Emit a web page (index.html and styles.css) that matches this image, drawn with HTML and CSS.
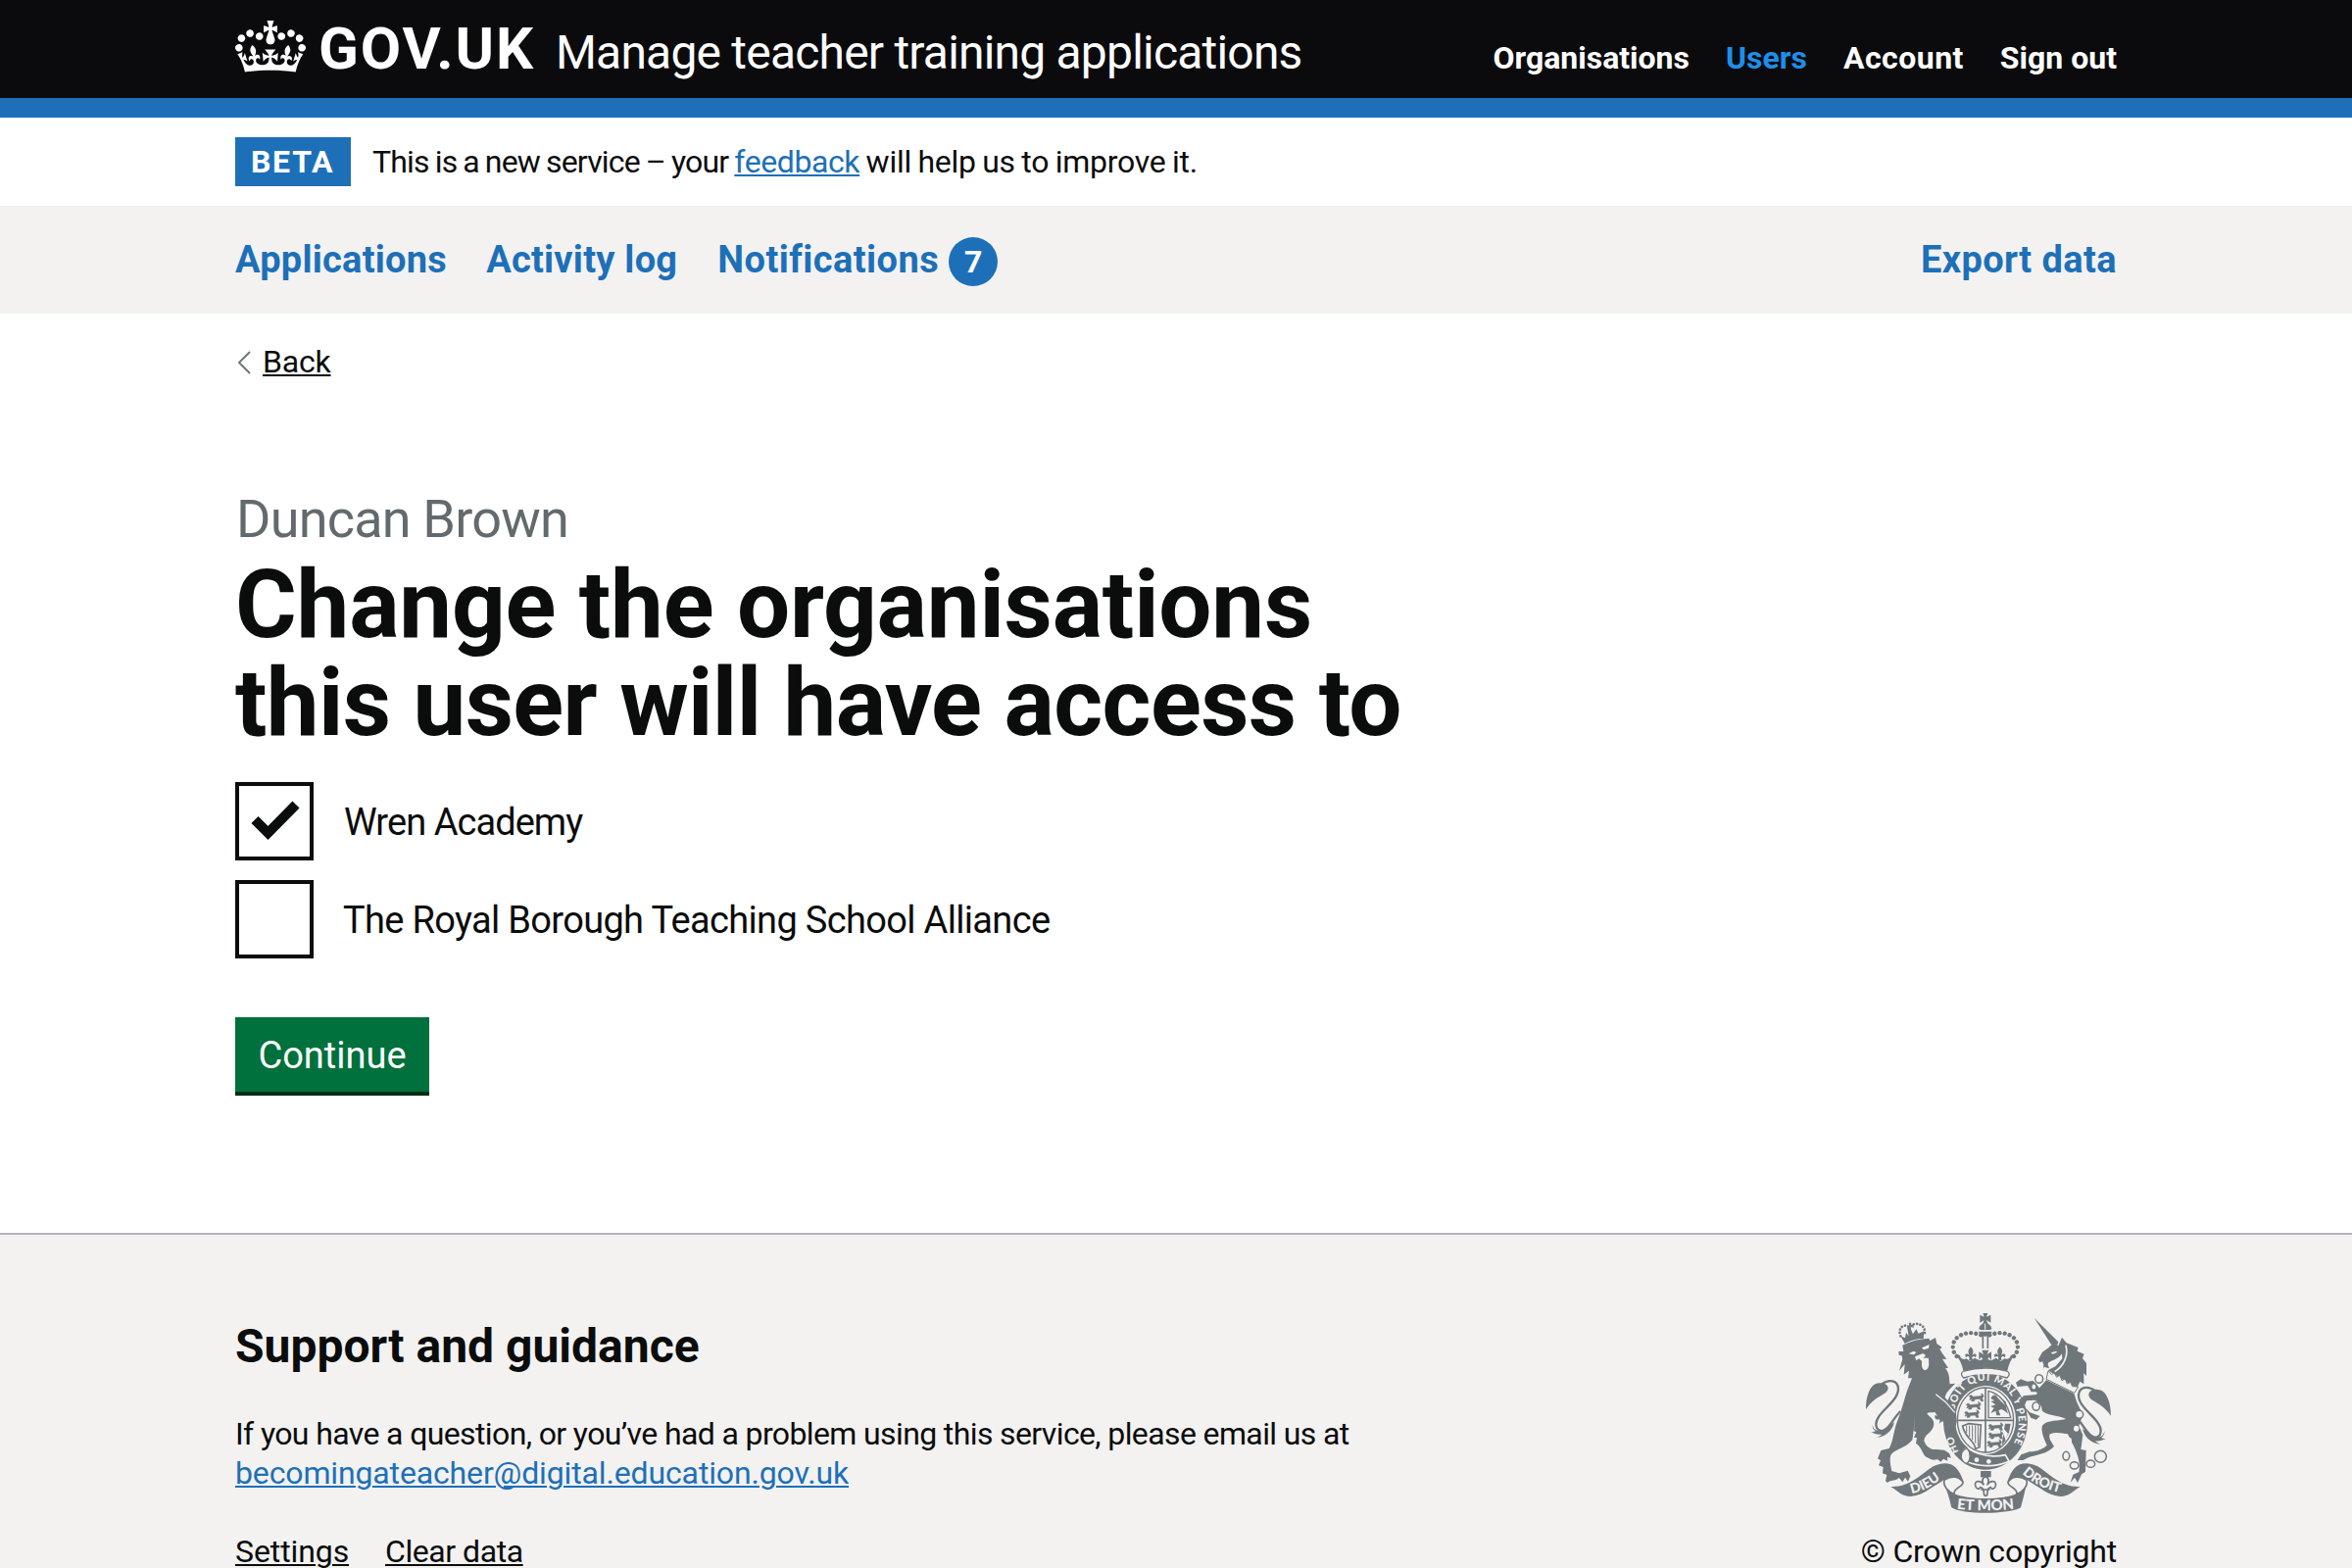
FILE: index.html
```html
<!DOCTYPE html>
<html lang="en">
<head>
<meta charset="utf-8">
<title>Change the organisations this user will have access to</title>
<link rel="stylesheet" href="styles.css">
</head>
<body>
<header class="header">
  <div class="container header-row">
    <a class="logo" href="#">
      <svg class="crown" viewBox="0 0 132 97" aria-hidden="true"><path fill="currentColor" fill-rule="evenodd" d="M25 30.2c3.5 1.5 7.7-.2 9.1-3.7 1.5-3.6-.2-7.8-3.9-9.2-3.6-1.4-7.6.3-9.1 3.9-1.4 3.5.3 7.5 3.9 9zM9 39.5c3.6 1.5 7.8-.2 9.2-3.7 1.5-3.6-.2-7.8-3.9-9.1-3.6-1.5-7.6.2-9.1 3.8-1.4 3.5.3 7.5 3.8 9zM4.4 57.2c3.5 1.5 7.7-.2 9.1-3.8 1.5-3.6-.2-7.7-3.9-9.1-3.5-1.5-7.6.3-9.1 3.8-1.4 3.5.3 7.6 3.9 9.1zm38.3-21.4c3.5 1.5 7.7-.2 9.1-3.8 1.5-3.6-.2-7.7-3.9-9.1-3.6-1.5-7.6.3-9.1 3.8-1.3 3.6.4 7.7 3.9 9.1zm64.4-5.6c-3.6 1.5-7.8-.2-9.1-3.7-1.5-3.6.2-7.8 3.8-9.2 3.6-1.4 7.7.3 9.2 3.9 1.3 3.5-.4 7.5-3.9 9zm15.9 9.3c-3.6 1.5-7.7-.2-9.1-3.7-1.5-3.6.2-7.8 3.7-9.1 3.6-1.5 7.7.2 9.2 3.8 1.5 3.5-.3 7.5-3.8 9zm4.7 17.7c-3.6 1.5-7.8-.2-9.2-3.8-1.5-3.6.2-7.7 3.9-9.1 3.6-1.5 7.7.3 9.2 3.8 1.3 3.5-.4 7.6-3.9 9.1zM89.3 35.8c-3.6 1.5-7.8-.2-9.2-3.8-1.4-3.6.2-7.7 3.9-9.1 3.6-1.5 7.7.3 9.2 3.8 1.4 3.6-.3 7.7-3.9 9.1zM69.7 17.7l8.9 4.7V9.3l-8.9 2.8c-.2-.3-.5-.6-.9-.9L72.4 0H59.6l3.5 11.2c-.3.3-.6.5-.9.9l-8.8-2.8v13.1l8.8-4.7c.3.3.6.7.9.9l-5 15.4v.1c-.2.8-.4 1.6-.4 2.4 0 4.1 3.1 7.5 7 8.1h.2c.3 0 .7.1 1 .1.4 0 .7 0 1-.1h.2c4-.6 7.1-4.1 7.1-8.1 0-.8-.1-1.7-.4-2.4V34l-5.1-15.4c.4-.2.7-.6 1-.9zM66 92.8c16.9 0 32.8 1.1 47.1 3.2 4-16.9 8.9-26.7 14-33.5l-9.6-3.4c1 4.9 1.1 7.2 0 10.2-1.5-1.4-3-4.3-4.2-8.7L108.6 76c2.8-2 5-3.2 7.5-3.3-4.4 9.4-10 11.9-13.6 11.2-4.3-.8-6.3-4.6-5.6-7.9 1-4.7 5.7-5.9 8-.5 4.3-8.7-3-11.4-7.6-8.8 7.1-7.2 7.9-13.5 2.1-21.1-8 6.1-8.1 12.3-4.5 20.8-4.7-5.4-12.1-2.5-9.5 6.2 3.4-5.2 7.9-2 7.2 3.1-.6 4.3-6.4 7.8-13.5 7.2-10.3-.9-10.9-8-11.2-13.8 2.5-.5 7.1 1.8 11 7.3L80.2 60c-4.1 4.4-8 5.3-12.3 5.4 1.4-4.4 8-11.6 8-11.6H55.5s6.4 7.2 7.9 11.6c-4.2-.1-8-1-12.3-5.4l1.4 16.4c3.9-5.5 8.5-7.7 10.9-7.3-.3 5.8-.9 12.8-11.1 13.8-7.2.6-12.9-2.9-13.5-7.2-.7-5 3.8-8.3 7.1-3.1 2.7-8.7-4.6-11.6-9.4-6.2 3.7-8.5 3.6-14.7-4.6-20.8-5.8 7.6-5 13.9 2.2 21.1-4.7-2.6-11.9.1-7.7 8.8 2.3-5.5 7.1-4.2 8.1.5.7 3.3-1.3 7.1-5.7 7.9-3.5.7-9-1.8-13.5-11.2 2.5.1 4.7 1.3 7.5 3.3l-4.7-15.4c-1.2 4.4-2.7 7.2-4.3 8.7-1.1-3-.9-5.3 0-10.2l-9.5 3.4c5 6.9 9.9 16.7 14 33.5 14.8-2.1 30.8-3.2 47.7-3.2z"/></svg>
      <span class="logotype">GOV.UK</span>
    </a>
    <a class="product" href="#">Manage teacher training applications</a>
    <nav class="account-nav">
      <a href="#">Organisations</a>
      <a class="current" href="#">Users</a>
      <a class="account" href="#">Account</a>
      <a href="#">Sign out</a>
    </nav>
  </div>
</header>

<div class="container phase">
  <strong class="tag">BETA</strong>
  <span class="phase-text">This is a new service – your <a class="link feedback" href="#">feedback</a><span class="phase-tail"> will help us to improve it.</span></span>
</div>

<nav class="primary-nav">
  <div class="container primary-row">
    <a href="#">Applications</a>
    <a class="activity" href="#">Activity log</a>
    <a class="notifications" href="#">Notifications</a>
    <span class="badge">7</span>
    <a class="export" href="#">Export data</a>
  </div>
</nav>

<main class="container main">
  <a class="back" href="#">
    <svg class="chevron" viewBox="0 0 14 24" aria-hidden="true"><path d="M13 1 2 12l11 11" fill="none" stroke="#6f777b" stroke-width="2"/></svg>
    <span>Back</span>
  </a>
  <span class="caption">Duncan Brown</span>
  <h1 class="title"><span class="title-first">Change the organisations</span><br><span class="title-second">this user will have access to</span></h1>
  <div class="checkboxes">
    <label class="option">
      <span class="box"><svg viewBox="0 0 72 72" aria-hidden="true"><path d="M16 34.5 29.5 48 58 19" fill="none" stroke="#0b0c0c" stroke-width="10"/></svg></span>
      <span class="label label-wren">Wren Academy</span>
    </label>
    <label class="option">
      <span class="box"></span>
      <span class="label">The Royal Borough Teaching School Alliance</span>
    </label>
  </div>
  <button class="button" type="button">Continue</button>
</main>

<footer class="footer">
  <div class="container footer-row">
    <div class="footer-main">
      <h2 class="footer-heading">Support and guidance</h2>
      <p class="support">If you have a question, or you’ve had a problem using this service, please email us at<br><a class="link email" href="#">becomingateacher@digital.education.gov.uk</a></p>
      <div class="footer-links"><a class="settings" href="#">Settings</a><a href="#">Clear data</a></div>
    </div>
    <div class="footer-meta">
      <svg class="crest" viewBox="72 60 750 612" aria-hidden="true">
        <defs>
          <path id="motto" d="M343 356A97 112 0 0 1 534 362A97 112 0 0 1 509 480"/>
          <path id="honi" d="M356 484A97 113 0 0 1 339 427"/>
          <path id="dieu" d="M212 612Q264 603 320 552"/>
          <path id="mon" d="M350 659Q438 669 526 659"/>
          <path id="droit" d="M550 550Q602 599 678 612"/>
          <g id="fleur"><path d="M0-20C-9-10-9-4-4 6-13-4-22 4-14 12-10 7-5 9-4 14L-6 22H6L4 14C5 9 10 7 14 12 22 4 13-4 4 6 9-4 9-10 0-20z"/></g>
          <g id="passant"><path d="M2 8C6 2 12 5 14 9L34 7C42 8 42 2 38 0 46 0 49 8 42 13L45 22H38L35 15 20 16 17 22H9L11 16 3 18 7 12z" stroke="#6f777b" stroke-width="2"/></g>
          <g id="tail"><path d="M72 354C72 315 84 276 112 274 126 272 138 276 140 289 137 314 106 306 72 354z"/><path d="M120 278C143 260 170 266 171 291 172 332 103 363 103 400 103 414 112 422 124 420 144 414 152 386 178 360" fill="none" stroke="#6f777b" stroke-width="7"/><path d="M92 401C94 414 103 420 115 421L140 407 159 394C153 416 139 437 104 441 112 438 117 435 120 431 108 433 99 430 88 424 96 424 99 422 101 420 94 416 91 410 92 401z"/></g>
        </defs>
        <g fill="#6f777b">
          <!-- royal crown -->
          <path d="M421 65 434 71 430 60H445L441 71 454 65V89L441 81 446 94H429L434 81 421 89z"/>
          <path d="M418 108A19 17 0 0 1 457 108L452 111H423z"/><path d="M437 92V110" stroke="#f3f2f1" stroke-width="3"/>
          <path d="M417 116H458Q454 131 437 131 421 131 417 116z"/>
          <path d="M430 130V168M445 130V168" stroke="#6f777b" stroke-width="5"/>
          <path d="M424 127C400 117 372 118 352 134 333 150 335 177 350 192M451 127C475 117 503 118 523 134 542 150 540 177 525 192" fill="none" stroke="#6f777b" stroke-width="13" stroke-linecap="round" stroke-dasharray="0.1 15.5"/>
          <path d="M346 183 360 190C362 202 372 202 380 199L390 207 405 197 420 205 430 201 425 194 418 204V178L432 186 427 173H448L443 186 456 178V204L449 194 445 201 455 205 470 197 485 207 496 199C504 202 514 200 515 190L529 183C517 201 508 218 505 236Q437 218 370 236C367 218 358 201 346 183z"/>
          <use href="#fleur" x="393" y="183"/><use href="#fleur" x="482" y="183"/>
          <!-- garter and shield -->
          <ellipse cx="438" cy="392" rx="129" ry="147"/>
          <ellipse cx="438" cy="387" rx="93" ry="105" fill="#f3f2f1"/>
          <ellipse cx="438" cy="387" rx="86" ry="99" fill="none" stroke="#6f777b" stroke-width="4"/>
          <path d="M372 237Q437 219 503 237C514 242 512 251 504 258Q437 238 371 258C363 251 361 242 372 237z" fill="#f3f2f1" stroke="#6f777b" stroke-width="4"/>
          <path d="M438 287V487M352 388H524" stroke="#6f777b" stroke-width="5"/>
          <use href="#passant" x="386" y="307"/><use href="#passant" x="377" y="332"/><use href="#passant" x="372" y="357"/>
          <path d="M447 380V298Q500 312 515 380z" fill="none" stroke="#6f777b" stroke-width="4"/>
          <path d="M455 322C457 309 471 307 474 317L486 330 498 341 492 325 500 331 501 348 507 368 498 360 487 354 478 358 484 373H472L469 359 454 366 464 350 453 345 469 340 455 330 466 327z"/>
          <path d="M368 405 387 398 424 402 420 470 407 475C406 450 374 442 368 405z" fill="none" stroke="#6f777b" stroke-width="5"/>
          <path d="M380 405V426M389 404V438M398 403V448M407 403V458M415 403V467" stroke="#6f777b" stroke-width="3"/>
          <use href="#passant" x="445" y="396"/><use href="#passant" x="445" y="422"/><use href="#passant" x="441" y="448"/>
          <path d="M498 398H515L510 425 500 445 507 428 495 415zM493 430 500 450 488 464z"/>
          <path d="M383 473C364 479 360 502 378 514 413 529 467 534 510 513L499 494C457 502 420 499 383 473z" stroke="#f3f2f1" stroke-width="5"/>
          <path d="M381 473C356 484 360 512 380 521 394 511 393 486 381 473z" fill="#f3f2f1" stroke="#6f777b" stroke-width="4"/>
          <g fill="#f3f2f1"><circle cx="411" cy="509" r="7"/><circle cx="448" cy="514" r="7"/></g>
          <g class="motto"><text><textPath href="#motto" textLength="388" lengthAdjust="spacing">SOIT QUI MAL Y PENSE</textPath></text><text><textPath href="#honi">HO</textPath></text></g>
          <path d="M423 543H455V562H423z"/>
          <path d="M438 558C426 567 427 577 433 586 423 570 403 572 407 588 408 598 420 601 422 593 430 594 433 601 433 611 434 622 443 622 444 611 444 601 447 594 454 593 456 601 468 598 469 588 473 572 453 570 443 586 449 577 450 567 438 558zM424 600H452" fill="#f3f2f1" stroke="#6f777b" stroke-width="5"/>

          <!-- lion -->
          <use href="#tail"/>
          <path d="M178 130C169 107 186 92 201 100M209 98C228 86 255 95 252 122" fill="none" stroke="#6f777b" stroke-width="8" stroke-linecap="round" stroke-dasharray="0.1 10"/>
          <path d="M197 96 205 98 203 89H211L209 97 218 94V104L209 102 210 110 216 124 226 109 233 122 250 115 248 138Q218 138 191 153L178 130 192 136 195 119 203 130z"/>
          <path d="M184 158Q221 139 265 137L268 144 285 135 289 153 305 165 298 170 306 183 319 201 306 200 324 228 315 229C330 246 326 262 329 277L346 275C328 292 317 303 314 318L340 348 348 366 350 391 346 412C335 420 326 416 326 411 316 414 314 408 310 403 315 396 311 389 303 392L296 398 299 385C286 388 280 381 284 372L291 374 283 363C271 365 264 363 259 366 264 378 281 381 280 401 277 425 251 430 250 450 255 467 270 479 287 477L312 479 327 489 333 503 321 500 322 512 309 506 301 515 291 507C276 514 267 504 253 498 243 482 237 464 225 459L228 441 219 441 226 424 219 421 222 370C220 400 219 421 214 448 197 470 166 476 150 491 142 503 148 526 151 543L174 550 200 542 208 559 201 575 192 563 184 577 173 563C165 574 148 569 138 579L132 574 136 555 123 550 125 531 111 526 117 511 108 505 118 480 143 474C158 446 155 425 168 391 183 355 192 311 204 282L213 259 201 259 204 236 188 248 191 216 174 236 184 200 182 190 173 188 172 177 187 177z"/>
          <path d="M203 184 218 176 226 180 219 187zM243 166 266 156 264 167 249 172zM222 193 247 183 255 189 248 197H263L264 202Q268 232 253 235 241 232 243 206L234 199 226 205z" fill="#f3f2f1"/>
          <path d="M286 308 316 332 344 364" fill="none" stroke="#f3f2f1" stroke-width="4"/>

          <!-- unicorn -->
          <use href="#tail" transform="translate(894 20) scale(-1 1)"/>
          <path d="M587 74 661 148 656 164 640 157z"/>
          <path d="M640 157 661 160 672 134 686 151 722 165 719 176 740 185 735 198 747 213 747 252 739 244V277L727 269 718 290 629 235 653 222 673 199 672 184C663 199 643 204 631 211 625 222 635 224 632 229L618 224 615 231 616 216C611 213 614 208 620 208L603 210 600 201 612 179 631 166z"/>
          <path d="M638 181 655 176 657 180 644 185z" fill="#f3f2f1"/>
          <path d="M684 158C692 190 679 221 650 239" fill="none" stroke="#f3f2f1" stroke-width="5"/>
          <path d="M630 237 641 248 648 242 656 256 665 250 672 266 682 261 688 276 698 271 704 284 722 285 710 304 624 262z" fill="#f3f2f1" stroke="#6f777b" stroke-width="3"/>
          <path d="M624 265 709 306 718 333 736 371 724 405 736 433 730 477 746 480 744 546 733 552 720 579 711 563 698 579 706 554 724 546C731 513 714 477 704 459L690 430C672 427 655 422 635 430 630 443 640 454 648 468 626 491 597 493 571 501L553 510H536L547 493 573 484C596 484 617 474 626 464 615 440 607 418 612 404 626 386 665 390 685 384 657 372 624 373 611 358 612 343 600 330 588 326L564 328 556 346 574 364 605 375 593 386 577 380 565 360 548 347 541 330 554 313 594 309C600 300 592 300 578 301L567 282 536 285 531 272 546 262 566 269 584 267 603 289z"/>
          <g fill="#f3f2f1"><ellipse cx="716" cy="413" rx="8" ry="9"/><ellipse cx="694" cy="450" rx="8" ry="10"/></g>
          <g fill="#f3f2f1" stroke="#6f777b" stroke-width="4.5"><ellipse cx="602" cy="261" rx="12" ry="13"/><ellipse cx="586" cy="285" rx="8" ry="10"/><ellipse cx="593" cy="345" rx="11" ry="13"/><circle cx="725" cy="370" r="12"/><ellipse cx="685" cy="497" rx="10" ry="13"/><ellipse cx="710" cy="526" rx="13" ry="11"/><ellipse cx="760" cy="521" rx="13" ry="11"/><circle cx="790" cy="499" r="18"/></g>

          <!-- ribbon -->
          <path d="M148 591C206 594 240 553 278 529 322 509 354 520 371 577 350 556 331 560 313 569 270 594 248 617 208 621 180 620 167 602 148 591z"/>
          <path d="M728 591C670 594 636 553 598 529 554 509 522 520 505 577 526 556 545 560 563 569 606 594 628 617 668 621 696 620 709 602 728 591z"/>
          <path d="M313 570C334 556 357 559 369 577 370 594 340 592 342 614 325 607 305 588 313 570zM563 570C542 556 519 559 507 577 506 594 536 592 534 614 551 607 571 588 563 570z" fill="#f3f2f1" stroke="#6f777b" stroke-width="5"/>
          <path d="M313 585C322 614 372 627 438 627 504 627 554 614 563 585 557 614 552 632 546 655 510 677 366 677 334 655 329 632 323 612 313 585z"/>
          <g class="banner"><text><textPath href="#dieu">DIEU</textPath></text><text class="mon"><textPath href="#mon">ET MON</textPath></text><text><textPath href="#droit">DROIT</textPath></text></g>
        </g>
      </svg>
      <span class="copyright">© Crown copyright</span>
    </div>
  </div>
</footer>
</body>
</html>
```
FILE: styles.css
```css
* { box-sizing: border-box; }

body {
  margin: 0;
  height: 1600px;
  overflow: hidden;
  background: #fff;
  color: #0b0c0c;
  font-family: Roboto, "Liberation Sans", sans-serif;
  font-size: 32px;
  line-height: 40px;
}

a { color: inherit; text-decoration: none; white-space: nowrap; }

.container { width: 1920px; margin: 0 auto; }

/* Header */
.header { height: 120px; background: #0b0b0d; border-bottom: 20px solid #1d70b8; color: #fff; }
.header-row { display: flex; align-items: flex-start; padding-top: 20px; }
.logo { display: flex; align-items: flex-start; width: 327px; }
.crown { width: 72px; height: 53px; margin-top: 1px; flex: none; }
.logotype { margin-left: 13px; font-size: 60px; line-height: 60px; font-weight: 700; letter-spacing: 1.92px; }
.product { margin-top: 4px; font-size: 48px; line-height: 60px; letter-spacing: -0.8px; }
.account-nav { display: flex; gap: 37px; margin: 19px 0 0 auto; font-weight: 700; }
.account-nav .current { color: #1d8feb; }
.account-nav .account { letter-spacing: 0.47px; }

/* Phase banner */
.phase { display: flex; align-items: center; height: 90px; gap: 22px; }
.tag { width: 118px; height: 50px; padding-left: 16px; background: #1d70b8; color: #fff; line-height: 50px; letter-spacing: 1.7px; }
.phase-text { line-height: 50px; letter-spacing: -0.8px; word-spacing: -1.25px; white-space: nowrap; }
.feedback { letter-spacing: -0.4px; }
.phase-tail { letter-spacing: -0.25px; }
.link { color: #1d70b8; }
.link, .footer-links a, .back span { text-decoration: underline; text-decoration-thickness: 2px; text-underline-offset: 2px; }

/* Primary navigation */
.primary-nav { height: 110px; background: #f3f2f1; color: #1d70b8; }
.primary-row { display: flex; padding-top: 30px; font-size: 38px; font-weight: 700; line-height: 50px; letter-spacing: 0.25px; }
.activity { margin-left: 40px; }
.notifications { margin-left: 41px; letter-spacing: 0.44px; }
.badge { width: 50px; height: 50px; margin: 2px 0 0 10px; border-radius: 50%; background: #1d70b8; color: #fff; font-size: 32px; text-align: center; }
.export { margin-left: auto; letter-spacing: 0.4px; }

/* Page content */
.main { display: flex; flex-direction: column; align-items: flex-start; height: 938px; padding-top: 29px; }
.back { display: flex; align-items: flex-start; letter-spacing: -0.2px; }
.chevron { width: 14px; height: 24px; margin: 9px 12px 0 2px; }
.caption { margin: 111px 0 0 1px; color: #626a6e; font-size: 54px; line-height: 60px; letter-spacing: -0.79px; }
.title { margin: 7px 0 0; font-size: 96px; line-height: 100px; font-weight: 700; white-space: nowrap; }
.title-first { letter-spacing: -0.21px; }
.title-second { letter-spacing: -0.65px; }
.checkboxes { display: grid; gap: 20px; margin-top: 31px; }
.option { display: flex; height: 80px; }
.box { width: 80px; height: 80px; border: 4px solid #0b0c0c; }
.box svg { display: block; width: 72px; height: 72px; }
.label { padding: 1px 0 0 30px; font-size: 38px; line-height: 80px; letter-spacing: -0.67px; }
.label-wren { letter-spacing: -0.95px; padding-left: 31px; }
.button { width: 198px; height: 76px; margin: 60px 0 0; padding: 2px 0 0; border: 0; background: #00703c; box-shadow: 0 4px 0 #002d18; color: #fff; font: 400 38px/74px Roboto, "Liberation Sans", sans-serif; }

/* Footer */
.footer { height: 342px; border-top: 2px solid #b1b4b6; background: #f3f2f1; }
.footer-row { display: flex; justify-content: space-between; padding-top: 80px; }
.footer-main { padding-top: 4px; }
.footer-heading { margin: 0; font-size: 48px; line-height: 60px; font-weight: 700; }
.support { margin: 39px 0 0; letter-spacing: -0.62px; }
.email { letter-spacing: -0.14px; }
.footer-links { display: flex; gap: 37px; margin-top: 40px; letter-spacing: -0.45px; }
.footer-links .settings { letter-spacing: -0.1px; }
.footer-meta { display: flex; flex-direction: column; align-items: flex-end; }
.crest { width: 250px; height: 204px; margin-right: 6px; }
.copyright { margin-top: 19px; letter-spacing: -0.22px; }
.motto, .banner { fill: #f3f2f1; font-family: Lato, sans-serif; font-weight: 900; }
.motto { font-size: 32px; }
.banner { font-size: 42px; }
.banner .mon { font-size: 45px; }
```
